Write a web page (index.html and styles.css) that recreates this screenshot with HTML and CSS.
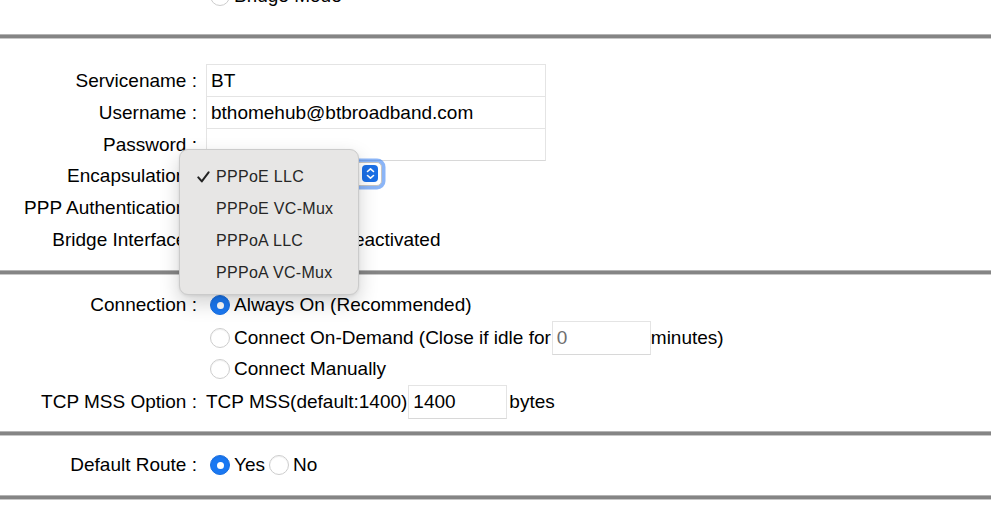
FILE: index.html
```html
<!DOCTYPE html>
<html lang="en">
<head>
<meta charset="utf-8">
<title>WAN Settings</title>
<link rel="stylesheet" href="styles.css">
</head>
<body>
<div class="page">
  <section class="sec sec-top">
    <div class="row">
      <div class="label"></div>
      <div class="value"><span class="radio"></span><span>Bridge Mode</span></div>
    </div>
  </section>
  <div class="rule"></div>

  <section class="sec sec-ppp">
    <div class="row">
      <div class="label">Servicename :</div>
      <div class="value"><div class="field wide">BT</div></div>
    </div>
    <div class="row">
      <div class="label">Username :</div>
      <div class="value"><div class="field wide">bthomehub@btbroadband.com</div></div>
    </div>
    <div class="row">
      <div class="label">Password :</div>
      <div class="value"><div class="field wide"></div></div>
    </div>
    <div class="row">
      <div class="label">Encapsulation :</div>
      <div class="value">
        <div class="select focused">
          <span class="select-text">PPPoE LLC</span>
          <span class="stepper">
            <svg width="9" height="13" viewBox="0 0 9 13"><path d="M1.5 4.5 L4.5 1.8 L7.5 4.5 M1.5 8.5 L4.5 11.2 L7.5 8.5" fill="none" stroke="#fff" stroke-width="1.6" stroke-linecap="round" stroke-linejoin="round"/></svg>
          </span>
        </div>
      </div>
    </div>
    <div class="row">
      <div class="label">PPP Authentication :</div>
      <div class="value"><div class="select small"><span class="select-text">AUTO</span></div></div>
    </div>
    <div class="row">
      <div class="label">Bridge Interface :</div>
      <div class="value"><span class="radio"></span><span>Activated</span><span class="radio on"></span><span>Deactivated</span></div>
    </div>
  </section>
  <div class="rule"></div>

  <section class="sec sec-conn">
    <div class="row">
      <div class="label">Connection :</div>
      <div class="value"><span class="radio on"></span><span>Always On (Recommended)</span></div>
    </div>
    <div class="row">
      <div class="label"></div>
      <div class="value"><span class="radio"></span><span>Connect On-Demand (Close if idle for</span><div class="field short muted">0</div><span>minutes)</span></div>
    </div>
    <div class="row">
      <div class="label"></div>
      <div class="value"><span class="radio"></span><span>Connect Manually</span></div>
    </div>
    <div class="row">
      <div class="label">TCP MSS Option :</div>
      <div class="value"><span>TCP MSS(default:1400)</span><div class="field short mss">1400</div><span>bytes</span></div>
    </div>
  </section>
  <div class="rule"></div>

  <section class="sec sec-route">
    <div class="row">
      <div class="label">Default Route :</div>
      <div class="value"><span class="radio on"></span><span>Yes</span><span class="radio"></span><span>No</span></div>
    </div>
  </section>
  <div class="rule"></div>

  <div class="popup">
    <div class="item"><span class="check"><svg width="13" height="12" viewBox="0 0 13 12"><path d="M1.3 6.4 L4.8 10.4 L11.6 1.3" fill="none" stroke="#222" stroke-width="2" stroke-linecap="round" stroke-linejoin="round"/></svg></span>PPPoE LLC</div>
    <div class="item"><span class="check"></span>PPPoE VC-Mux</div>
    <div class="item"><span class="check"></span>PPPoA LLC</div>
    <div class="item"><span class="check"></span>PPPoA VC-Mux</div>
  </div>
</div>
</body>
</html>
```

FILE: styles.css
```css
html, body {
  margin: 0;
  padding: 0;
  background: #fff;
  overflow: hidden;
}
body {
  font-family: "Liberation Sans", Arial, sans-serif;
  font-size: 19px;
  color: #000;
}
.page {
  position: relative;
  width: 999px;
  height: 512px;
  overflow: hidden;
}
.sec {
  width: 991px;
}
.sec-top {
  margin-top: -20px;
  padding-bottom: 23px;
}
.sec-ppp {
  padding-top: 26px;
  padding-bottom: 15px;
}
.sec-conn {
  padding-top: 15px;
  padding-bottom: 15px;
}
.sec-route {
  padding-top: 14px;
  padding-bottom: 15px;
}
.rule {
  width: 991px;
  height: 3px;
  background: #858585;
  box-shadow: 0 1px 0 #c8c8c8, 0 -1px 0 #b4b4b4;
}
.row {
  display: grid;
  grid-template-columns: 206px 1fr;
  height: 32px;
  align-items: center;
}
.label {
  text-align: right;
  padding-right: 9px;
  white-space: nowrap;
}
.value {
  display: flex;
  align-items: center;
  white-space: nowrap;
}
.radio {
  box-sizing: border-box;
  width: 20px;
  height: 20px;
  border-radius: 50%;
  margin: 0 4px 0 4px;
  background: #fff;
  border: 1px solid #cdcdcd;
  box-shadow: inset 0 1px 1px rgba(0,0,0,0.06);
  flex: none;
  position: relative;
}
.radio.on {
  background: #1a78f2;
  border-color: #1a6fe0;
}
.radio.on::after {
  content: "";
  position: absolute;
  left: 50%;
  top: 50%;
  width: 7px;
  height: 7px;
  margin: -3.5px 0 0 -3.5px;
  border-radius: 50%;
  background: #fff;
}
.field {
  box-sizing: border-box;
  height: 33px;
  border: 1px solid #e4e4e4;
  border-bottom-color: #d8d8d8;
  background: #fff;
  padding: 0 4px;
  display: flex;
  align-items: center;
  font-size: 19px;
}
.field.wide {
  width: 340px;
}
.field.short {
  width: 99px;
  height: 34px;
  margin-left: 1px;
}
.field.mss {
  margin-left: 1px;
  margin-right: 2px;
}
.field.muted {
  color: #6f6f6f;
}
.select {
  box-sizing: border-box;
  width: 176px;
  height: 24px;
  border: 1px solid #c4c4c4;
  border-radius: 5px;
  background: #fff;
  display: flex;
  align-items: center;
  justify-content: space-between;
  padding: 0 3px 0 6px;
  font-size: 14px;
  margin-top: -5px;
}
.select.focused {
  box-shadow: 0 0 0 3.5px rgba(44, 120, 240, 0.55);
}
.select.small {
  width: 90px;
  margin-top: 0;
}
.stepper {
  width: 16px;
  height: 17px;
  border-radius: 4px;
  background: #1b6fe6;
  display: flex;
  align-items: center;
  justify-content: center;
}
.popup {
  position: absolute;
  left: 179px;
  top: 149px;
  width: 180px;
  height: 146px;
  box-sizing: border-box;
  background: #e7e6e5;
  border: 1px solid #cbcbcb;
  border-radius: 9px;
  box-shadow: 0 8px 20px rgba(0,0,0,0.18), 0 1px 3px rgba(0,0,0,0.08);
  padding-top: 11px;
}
.item {
  height: 32px;
  display: flex;
  align-items: center;
  font-size: 16px;
  letter-spacing: 0.3px;
  color: #262626;
}
.check {
  width: 36px;
  display: flex;
  justify-content: flex-end;
  box-sizing: border-box;
  padding-right: 6px;
}
```
